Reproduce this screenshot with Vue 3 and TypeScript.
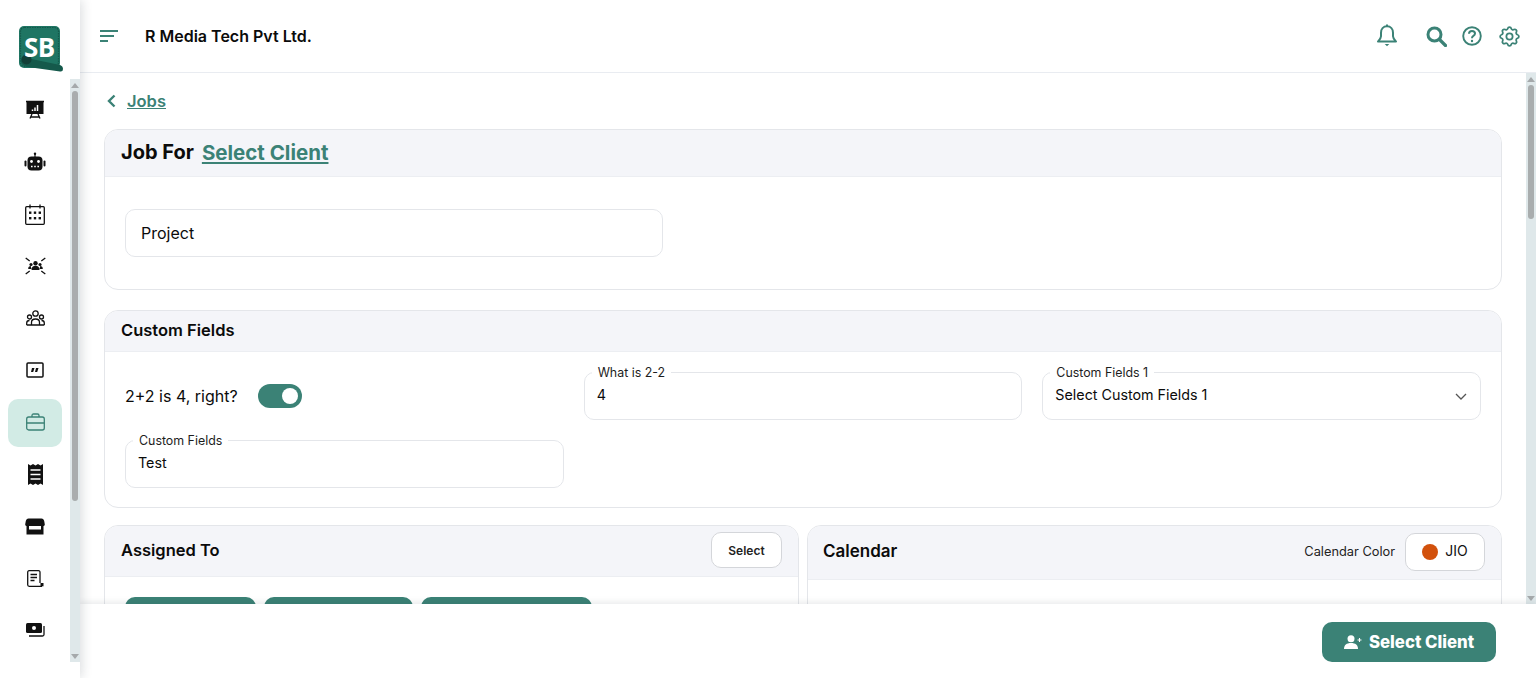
<script setup lang="ts">
const chips: number[] = [131, 149, 171]
</script>

<template>
  <div class="app">
    <aside class="side">
      <div class="logo">
        <svg class="logo-art" width="46" height="48" viewBox="0 0 46 48">
          <rect x="1" y="1" width="41" height="42" rx="5" fill="#1f7563" />
          <rect x="2.500" y="2.500" width="38" height="39" rx="4" fill="none" stroke="#15594b" stroke-width="1.200" stroke-dasharray="1.500 1" />
          <path d="M4 32 L42 40 Q45 41 45 44 Q45 47 42 46.500 L10 42 Q3 41 3 36 Z" fill="#15594b" />
          <circle cx="8.500" cy="34.500" r="5" fill="#123f37" />
        </svg>
        <span class="logo-text">SB</span>
      </div>
      <div class="side-body">
        <nav class="nav">
          <div class="nav-item">
            <svg width="20" height="20" viewBox="0 0 20 20"><rect x="1.500" y="2" width="17" height="12" fill="#111" /><path d="M1 1.500h18M5 18.500l2-4.500M15 18.500l-2-4.500M6 17h8" stroke="#111" stroke-width="1.300" fill="none" /><path d="M7.500 11V9.500M10 11V7.500M12.500 11V5" stroke="#fff" stroke-width="1.500" /></svg>
          </div>
          <div class="nav-item">
            <svg width="22" height="20" viewBox="0 0 22 20"><circle cx="11" cy="1.800" r="1.200" fill="#111" /><path d="M10.400 2h1.200v3h-1.200z" fill="#111" /><rect x="3.500" y="4.500" width="15" height="14" rx="4" fill="#111" /><rect x="0.500" y="8.500" width="2" height="6" rx="1" fill="#111" /><rect x="19.500" y="8.500" width="2" height="6" rx="1" fill="#111" /><circle cx="7.500" cy="9.500" r="1.400" fill="#fff" /><circle cx="14.500" cy="9.500" r="1.400" fill="#fff" /><path d="M7 14.500h1.600M10.200 14.500h1.600M13.400 14.500h1.600" stroke="#fff" stroke-width="1.300" /></svg>
          </div>
          <div class="nav-item">
            <svg width="20" height="21" viewBox="0 0 20 21"><rect x="0.700" y="2.700" width="18.600" height="17.600" rx="1" fill="none" stroke="#111" stroke-width="1.300" /><path d="M5 0.500v4M15 0.500v4" stroke="#111" stroke-width="1.300" /><g fill="#111"><rect x="4" y="7.500" width="2.400" height="2.400" /><rect x="8.800" y="7.500" width="2.400" height="2.400" /><rect x="13.600" y="7.500" width="2.400" height="2.400" /><rect x="4" y="13" width="2.400" height="2.400" /><rect x="8.800" y="13" width="2.400" height="2.400" /><rect x="13.600" y="13" width="2.400" height="2.400" /></g></svg>
          </div>
          <div class="nav-item">
            <svg width="21" height="18" viewBox="0 0 21 18"><path d="M0.700 1l4 3M20.300 1l-4 3M0.700 17l4-3M20.300 17l-4-3" stroke="#111" stroke-width="1.300" /><circle cx="10.500" cy="6.200" r="2.200" fill="#111" /><circle cx="6" cy="7.500" r="1.600" fill="#111" /><circle cx="15" cy="7.500" r="1.600" fill="#111" /><path d="M6.500 13c0-3 1.600-4.300 4-4.300s4 1.300 4 4.300zM3.200 12c0-2 1-2.900 2.600-2.900l.6 3zM17.800 12c0-2-1-2.900-2.600-2.900l-.6 3z" fill="#111" /></svg>
          </div>
          <div class="nav-item">
            <svg width="19" height="16" viewBox="0 0 19 16" fill="none" stroke="#111" stroke-width="1.300"><circle cx="9.500" cy="3.500" r="2.700" /><circle cx="3.500" cy="7" r="2" /><circle cx="15.500" cy="7" r="2" /><path d="M5.500 15v-2.500c0-2 1.500-3.500 4-3.500s4 1.500 4 3.500V15zM0.700 15v-2c0-1.500 1-2.500 2.800-2.500M18.300 15v-2c0-1.500-1-2.500-2.800-2.500M0.700 15h17.600" /></svg>
          </div>
          <div class="nav-item">
            <svg width="18" height="16" viewBox="0 0 18 16"><rect x="1" y="1" width="16" height="14" rx="1" fill="none" stroke="#111" stroke-width="1.500" /><path d="M6 6h2.500L7.200 10H5zM10 6h2.500L11.200 10H9z" fill="#111" /></svg>
          </div>
          <div class="nav-item active">
            <svg width="19" height="18" viewBox="0 0 19 18" fill="none" stroke="#3b8276" stroke-width="1.300"><rect x="0.700" y="4" width="17.600" height="13" rx="2" /><path d="M6 4V2.500C6 1.500 6.600 1 7.500 1h4c.9 0 1.500.5 1.500 1.500V4M0.700 10h17.600M8 10h3" /></svg>
          </div>
          <div class="nav-item">
            <svg width="15" height="21" viewBox="0 0 15 21"><path d="M0 0l2.500 1.500L5 0l2.500 1.500L10 0l2.500 1.500L15 0v21l-2.500-1.500L10 21l-2.500-1.500L5 21l-2.500-1.500L0 21z" fill="#111" /><path d="M2.500 6h10M2.500 10.500h10M2.500 15h10" stroke="#fff" stroke-width="1.400" /></svg>
          </div>
          <div class="nav-item">
            <svg width="20" height="17" viewBox="0 0 20 17"><path d="M3.500 0.500h13c1.500 0 2.300 1 2.700 2.500l.6 3.500c0 1-1 1.500-2 1.500H2.200c-1 0-2-.5-2-1.500L.8 3C1.200 1.500 2 .5 3.500.5z" fill="#111" /><path d="M1.500 7h17v9.500h-17z" fill="#111" /><rect x="4" y="8" width="12" height="3.500" fill="#fff" /></svg>
          </div>
          <div class="nav-item">
            <svg width="17" height="17" viewBox="0 0 17 17" fill="none" stroke="#111" stroke-width="1.300"><path d="M13 13V2.300C13 1.300 12.500.7 11.500.7H2.200C1.200.7.700 1.300.700 2.300v12.500c0 1 .5 1.500 1.500 1.500H15" /><path d="M3.500 4.500h6.500M3.500 7.500h6.500M3.500 10.500h4" stroke-width="1.400" /><rect x="13.500" y="13" width="3" height="3.300" fill="#111" stroke="none" /></svg>
          </div>
          <div class="nav-item">
            <svg width="19" height="14" viewBox="0 0 19 14"><rect x="0" y="0" width="16" height="10" rx="1.500" fill="#111" /><circle cx="8" cy="5" r="2" fill="#fff" /><path d="M18 3v8.500c0 1-.6 1.500-1.500 1.500H3" fill="none" stroke="#111" stroke-width="1.300" /></svg>
          </div>
        </nav>
        <div class="sbar">
          <span class="arrow up"></span>
          <span class="sbar-track"><span class="thumb thumb-side"></span></span>
          <span class="arrow down"></span>
        </div>
      </div>
    </aside>

    <div class="main">
      <header class="top">
        <svg class="burger" width="18" height="12" viewBox="0 0 18 12"><path d="M0 1h18M0 6h14M0 11h8" stroke="#3b8276" stroke-width="2" /></svg>
        <span class="company">R Media Tech Pvt Ltd.</span>
        <div class="top-icons">
          <svg class="bell" width="22" height="24" viewBox="0 0 22 24" fill="none" stroke="#3b8276" stroke-width="2"><path d="M11 1.500v1.800M11 3.300c-3.700 0-6 2.800-6 6.500v3.500c0 2-1.500 3.500-3 5.200h18c-1.500-1.700-3-3.200-3-5.200V9.800c0-3.700-2.300-6.500-6-6.500z" stroke-linejoin="round" /><path d="M8.700 21h4.600L11 23.200z" fill="#3b8276" stroke="none" /></svg>
          <svg class="search" width="21" height="21" viewBox="0 0 21 21" fill="none" stroke="#3b8276"><circle cx="8.500" cy="8.500" r="6.500" stroke-width="3" /><path d="M13.500 13.500l6 6" stroke-width="3.200" stroke-linecap="round" /></svg>
          <svg class="help" width="20" height="20" viewBox="0 0 20 20" fill="none" stroke="#3b8276"><circle cx="10" cy="10" r="8.800" stroke-width="1.900" /><path d="M7 7.800c0-1.800 1.300-2.800 3-2.800s3 1 3 2.500-1 2-2 2.700c-.8.500-1 1-1 2" stroke-width="2" /><circle cx="10" cy="15" r="1.200" fill="#3b8276" stroke="none" /></svg>
          <svg class="gear" width="25" height="25" viewBox="0 0 24 24" fill="none" stroke="#3b8276" stroke-width="1.700"><path d="M10.325 4.317c.426 -1.756 2.924 -1.756 3.350 0a1.724 1.724 0 0 0 2.573 1.066c1.543 -.94 3.310 .826 2.370 2.370a1.724 1.724 0 0 0 1.065 2.572c1.756 .426 1.756 2.924 0 3.350a1.724 1.724 0 0 0 -1.066 2.573c.94 1.543 -.826 3.310 -2.370 2.370a1.724 1.724 0 0 0 -2.572 1.065c-.426 1.756 -2.924 1.756 -3.350 0a1.724 1.724 0 0 0 -2.573 -1.066c-1.543 .94 -3.310 -.826 -2.370 -2.370a1.724 1.724 0 0 0 -1.065 -2.572c-1.756 -.426 -1.756 -2.924 0 -3.350a1.724 1.724 0 0 0 1.066 -2.573c-.94 -1.543 .826 -3.310 2.370 -2.370c1 .608 2.296 .07 2.572 -1.065z" /><circle cx="12" cy="12" r="3" /></svg>
        </div>
      </header>

      <div class="middle">
        <div class="content">
          <div class="crumb">
            <svg width="9" height="14" viewBox="0 0 9 14" fill="none" stroke="#3b8276" stroke-width="2.400"><path d="M7.500 1.500L2 7l5.500 5.500" /></svg>
            <a class="crumb-link">Jobs</a>
          </div>

          <section class="card">
            <div class="card-head head-job">
              <h2 class="job-title">Job For</h2>
              <a class="job-link">Select Client</a>
            </div>
            <div class="card-body body-job">
              <div class="project">Project</div>
            </div>
          </section>

          <section class="card card-custom">
            <div class="card-head head-custom">
              <h3 class="sec-title">Custom Fields</h3>
            </div>
            <div class="custom-grid">
              <div class="toggle-row">
                <span class="toggle-label">2+2 is 4, right?</span>
                <span class="toggle"><span class="knob"></span></span>
              </div>
              <div class="field">
                <span class="legend">What is 2-2</span>
                <span class="value">4</span>
              </div>
              <div class="field">
                <span class="legend">Custom Fields 1</span>
                <span class="value">Select Custom Fields 1</span>
                <svg class="chev" width="12" height="7" viewBox="0 0 12 7" fill="none" stroke="#555" stroke-width="1.300"><path d="M1 1l5 5 5-5" /></svg>
              </div>
              <div class="field">
                <span class="legend">Custom Fields</span>
                <span class="value">Test</span>
              </div>
            </div>
          </section>

          <div class="two-col">
            <section class="card">
              <div class="card-head head-assign">
                <h3 class="sec-title">Assigned To</h3>
                <button class="mini-btn">Select</button>
              </div>
              <div class="chips">
                <div v-for="w in chips" :key="w" class="chip" :style="{ width: w + 'px' }"><span class="chip-x"></span></div>
              </div>
            </section>
            <section class="card">
              <div class="card-head head-cal">
                <h3 class="sec-title cal-title">Calendar</h3>
                <div class="cal-right">
                  <span class="cal-label">Calendar Color</span>
                  <button class="color-btn"><span class="dot"></span><span class="jio">JIO</span></button>
                </div>
              </div>
              <div class="cal-body"></div>
            </section>
          </div>
        </div>
        <div class="sbar sbar-main">
          <span class="arrow up"></span>
          <span class="sbar-track"><span class="thumb thumb-main"></span></span>
          <span class="arrow down"></span>
        </div>
        <footer class="foot">
          <button class="cta">
            <svg width="18" height="14" viewBox="0 0 18 14"><circle cx="7" cy="3.800" r="3.500" fill="#fff" /><path d="M0 14c0-4 2.500-6 7-6s7 2 7 6z" fill="#fff" /><path d="M13.500 5h4M15.500 3v4" stroke="#fff" stroke-width="1.100" /></svg>
            <span>Select Client</span>
          </button>
        </footer>
      </div>
    </div>
  </div>
</template>

<style>
html, body { margin: 0; background: #fff; }
</style>

<style scoped>
* { box-sizing: border-box; }
.app {
  display: flex;
  width: 1536px;
  height: 678px;
  overflow: hidden;
  font-family: Inter, "Liberation Sans", sans-serif;
  color: #0b0b0b;
  background: #fff;
}
.side {
  width: 80px;
  flex: none;
  display: flex;
  flex-direction: column;
  height: 678px;
  padding-bottom: 16px;
  box-shadow: 2px 0 10px rgba(40, 50, 60, 0.16);
  z-index: 3;
  background: #fff;
}
.logo {
  height: 79px;
  flex: none;
  position: relative;
}
.logo-art { position: absolute; left: 18px; top: 25px; }
.logo-text {
  position: absolute;
  left: 24px;
  top: 32px;
  font-family: "Open Sans", sans-serif;
  font-weight: 700;
  font-size: 26px;
  line-height: 30px;
  letter-spacing: -0.5px;
  color: #fff;
}
.side-body { flex: 1; display: flex; min-height: 0; }
.nav {
  width: 70px;
  padding: 8px 8px 0;
  display: flex;
  flex-direction: column;
  gap: 4px;
  overflow: hidden;
}
.nav-item {
  height: 48px;
  flex: none;
  display: flex;
  align-items: center;
  justify-content: center;
  border-radius: 10px;
}
.nav-item svg { margin-top: -2px; }
.nav-item.active { background: #d2ebe5; }
.sbar {
  width: 10px;
  flex: none;
  display: flex;
  flex-direction: column;
  align-items: center;
  background: #dfe8ea;
}
.arrow { width: 10px; height: 12px; flex: none; display: flex; align-items: center; justify-content: center; }
.arrow::before { content: ""; border-left: 4px solid transparent; border-right: 4px solid transparent; }
.arrow.up::before { border-bottom: 5px solid #a5a9ab; }
.arrow.down::before { border-top: 5px solid #a5a9ab; }
.sbar-track { flex: 1; width: 100%; display: block; padding: 0 2px; }
.thumb { display: block; width: 6px; border-radius: 3px; background: #a9adae; }
.thumb-side { height: 410px; }
.thumb-main { height: 134px; }

.main { flex: 1; min-width: 0; display: flex; flex-direction: column; }
.top {
  height: 73px;
  flex: none;
  display: flex;
  align-items: center;
  padding: 0 14px 0 20px;
  border-bottom: 1px solid #e9ecf1;
}
.burger { margin-right: 27px; margin-top: -1px; }
.company { font-size: 16px; font-weight: 600; }
.top-icons { margin-left: auto; display: flex; align-items: center; }
.bell { margin-right: 28px; margin-top: -2px; }
.search { margin-right: 15px; }
.help { margin-right: 15px; }

.middle { flex: 1; min-height: 0; display: flex; position: relative; }
.content { flex: 1; min-width: 0; padding: 16px 24px 0; overflow: hidden; }
.crumb { display: flex; align-items: center; height: 24px; gap: 11px; margin: 0 0 16px 3px; }
.crumb-link { color: #3b8276; font-size: 16.500px; font-weight: 600; text-decoration: underline; }
.card {
  border: 1px solid #e4e6ea;
  border-radius: 14px;
  background: #fff;
  margin-bottom: 20px;
  overflow: hidden;
}
.card-head {
  display: flex;
  align-items: center;
  background: #f4f5f9;
  border-bottom: 1px solid #eceef2;
  padding: 0 16px 2px;
}
.head-job { height: 47px; gap: 8px; }
.job-title { margin: 0; font-size: 20px; font-weight: 700; }
.job-link { color: #3b8276; font-size: 20.500px; font-weight: 700; text-decoration: underline; }
.body-job { height: 112px; padding: 32px 20px; }
.project {
  width: 538px;
  height: 48px;
  border: 1px solid #e4e6ea;
  border-radius: 10px;
  padding: 0 15px;
  display: flex;
  align-items: center;
  font-size: 16px;
}
.card-custom { margin-bottom: 17px; }
.head-custom { height: 41px; }
.sec-title { margin: 0; font-size: 16.500px; font-weight: 600; }
.cal-title { font-size: 17px; margin-top: -2px; }
.custom-grid {
  display: grid;
  grid-template-columns: repeat(3, 1fr);
  gap: 20px;
  padding: 20px;
  height: 155px;
}
.toggle-row { display: flex; align-items: center; gap: 20px; height: 47px; }
.toggle-label { font-size: 16px; }
.toggle {
  width: 44px;
  height: 24px;
  border-radius: 12px;
  background: #3b8276;
  display: flex;
  align-items: center;
  justify-content: flex-end;
  padding-right: 4px;
}
.knob { width: 16px; height: 16px; border-radius: 50%; background: #fff; }
.field {
  position: relative;
  height: 48px;
  border: 1px solid #e4e6ea;
  border-radius: 10px;
  display: flex;
  align-items: center;
  padding: 0 12px;
}
.legend {
  position: absolute;
  left: 7px;
  top: -7px;
  padding: 0 6px;
  background: #fff;
  font-size: 12.400px;
  line-height: 14px;
  color: #1d1d1d;
}
.value { font-size: 14.300px; margin-top: -3px; }
.chev { margin-left: auto; margin-right: 1px; }
.two-col { display: flex; gap: 8px; }
.two-col .card { flex: 1; min-width: 0; height: 200px; }
.head-assign { height: 51px; justify-content: space-between; }
.mini-btn {
  width: 71px;
  height: 36px;
  background: #fff;
  border: 1px solid #d4d6da;
  border-radius: 10px;
  font: 600 12px Inter, sans-serif;
  color: #222;
}
.chips { display: flex; gap: 8px; padding: 20px; }
.chip { height: 32px; border-radius: 10px; background: #3b8276; position: relative; }
.chip-x {
  position: absolute;
  right: 15px;
  top: 7px;
  width: 12px;
  height: 12px;
  border-radius: 50%;
  background: #9cc3bb;
}
.head-cal { height: 54px; justify-content: space-between; padding-left: 15px; }
.cal-right { display: flex; align-items: center; gap: 10px; }
.cal-label { font-size: 12.800px; color: #222; margin-top: -1px; }
.color-btn {
  width: 80px;
  height: 38px;
  background: #fff;
  border: 1px solid #d4d6da;
  border-radius: 10px;
  display: flex;
  align-items: center;
  justify-content: center;
  gap: 7px;
  font: 400 14px Inter, sans-serif;
  color: #111;
}
.jio { margin-top: -2px; }
.dot { width: 16px; height: 16px; border-radius: 50%; background: #d2510c; }
.sbar-main { height: 531px; }
.foot {
  position: absolute;
  left: 0;
  right: 0;
  bottom: 0;
  height: 74px;
  background: #fff;
  box-shadow: 0 -2px 6px rgba(40, 50, 60, 0.10);
  display: flex;
  align-items: center;
  justify-content: flex-end;
  padding: 2px 40px 0 0;
}
.cta {
  width: 174px;
  height: 40px;
  border: none;
  border-radius: 10px;
  background: #3b8276;
  color: #fff;
  display: flex;
  align-items: center;
  justify-content: center;
  gap: 7px;
  font: 800 16.800px Inter, sans-serif;
}
</style>
